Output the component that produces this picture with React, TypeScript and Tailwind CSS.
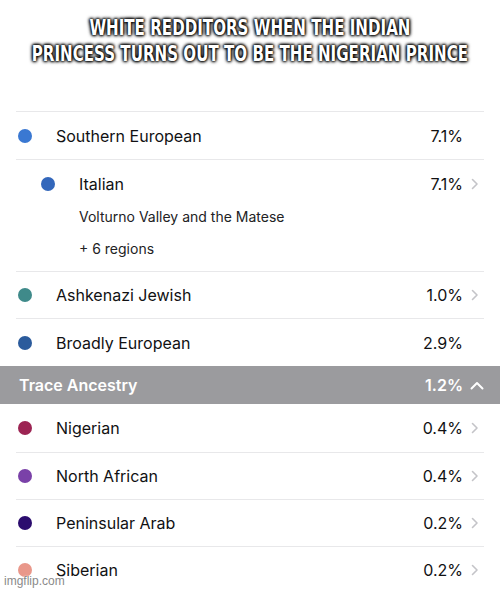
import React from "react";

const font = { fontFamily: "Inter, 'Noto Sans', sans-serif" };

function Chevron({ color = "#c4c4c8" }: { color?: string }) {
  return (
    <svg width="8" height="12" viewBox="0 0 8 12" fill="none">
      <path d="M1.5 1.5 L6 6 L1.5 10.5" stroke={color} strokeWidth="1.6" strokeLinecap="round" strokeLinejoin="round" />
    </svg>
  );
}

function Row({
  color,
  name,
  pct,
  chevron = true,
  h = "h-[48px]",
  border = true,
}: {
  color: string;
  name: string;
  pct: string;
  chevron?: boolean;
  h?: string;
  border?: boolean;
}) {
  return (
    <div className={`mx-4 ${border ? "border-t border-[#e8e8ea]" : ""} ${h} flex items-center`}>
      <div className="ml-[2px] w-[14px] h-[14px] rounded-full shrink-0" style={{ backgroundColor: color }} />
      <div className="ml-[24px] text-[16px] text-[#111113]">{name}</div>
      <div className="ml-auto text-[16px] text-[#111113]">{pct}</div>
      <div className="w-[21px] flex justify-center pl-[2px]">{chevron ? <Chevron /> : null}</div>
    </div>
  );
}

export default function App() {
  return (
    <div className="relative w-[500px] h-[592px] bg-white overflow-hidden" style={font}>
      <div className="h-[111px] pt-[15px] flex flex-col items-center">
        <div
          className="text-white text-[22px] leading-[26px] text-center font-bold flex flex-col items-center scale-x-[0.763] [text-shadow:0_0_3px_#000,0_0_3px_#000,0_0_4px_#000,0_0_5px_#000]"
          style={{ fontFamily: "Impact, 'Liberation Sans Narrow', 'DejaVu Sans Condensed', sans-serif", fontStretch: "condensed" }}
        >
          <div className="whitespace-nowrap leading-[26px]">WHITE REDDITORS WHEN THE INDIAN</div>
          <div className="whitespace-nowrap leading-[26px]">PRINCESS TURNS OUT TO BE THE NIGERIAN PRINCE</div>
        </div>
      </div>

      <Row color="#3a78d2" name="Southern European" pct="7.1%" chevron={false} />

      <div className="mx-4 border-t border-[#e8e8ea] pt-[13px] pb-[13px]">
        <div className="h-[22px] flex items-center">
          <div className="ml-[25px] w-[14px] h-[14px] rounded-full shrink-0 bg-[#3367bb]" />
          <div className="ml-[24px] text-[16px] text-[#111113]">Italian</div>
          <div className="ml-auto text-[16px] text-[#111113]">7.1%</div>
          <div className="w-[21px] flex justify-center pl-[2px]">
            <Chevron />
          </div>
        </div>
        <div className="mt-[11px] h-[20px] flex items-center pl-[63px] text-[14px] text-[#222224]">
          Volturno Valley and the Matese
        </div>
        <div className="mt-[12px] h-[20px] flex items-center pl-[63px] text-[14px] text-[#222224]">
          + 6 regions
        </div>
      </div>

      <Row color="#3f8a8a" name="Ashkenazi Jewish" pct="1.0%" h="h-[47px]" />
      <Row color="#2b5b9c" name="Broadly European" pct="2.9%" chevron={false} />

      <div className="h-[38px] bg-[#9b9b9e] flex items-center pl-[19px] pr-[16px]">
        <div className="text-[16px] font-semibold text-white">Trace Ancestry</div>
        <div className="ml-auto text-[16px] font-semibold text-white">1.2%</div>
        <div className="w-[21px] flex justify-end">
          <svg width="14" height="9" viewBox="0 0 14 9" fill="none">
            <path d="M1.5 7.5 L7 2 L12.5 7.5" stroke="#fff" strokeWidth="2" strokeLinecap="round" strokeLinejoin="round" />
          </svg>
        </div>
      </div>

      <Row color="#9c2453" name="Nigerian" pct="0.4%" border={false} h="h-[48px]" />
      <Row color="#7a41a8" name="North African" pct="0.4%" h="h-[47px]" />
      <Row color="#2b0c6e" name="Peninsular Arab" pct="0.2%" h="h-[47px]" />
      <Row color="#e9978a" name="Siberian" pct="0.2%" h="h-[47px]" />

      <div
        className="absolute left-[4px] bottom-[2px] text-[12px] text-[#8a8a8a] [text-shadow:0_0_2px_#fff]"
        style={{ fontFamily: "'Liberation Sans', Arial, sans-serif" }}
      >
        imgflip.com
      </div>
    </div>
  );
}
